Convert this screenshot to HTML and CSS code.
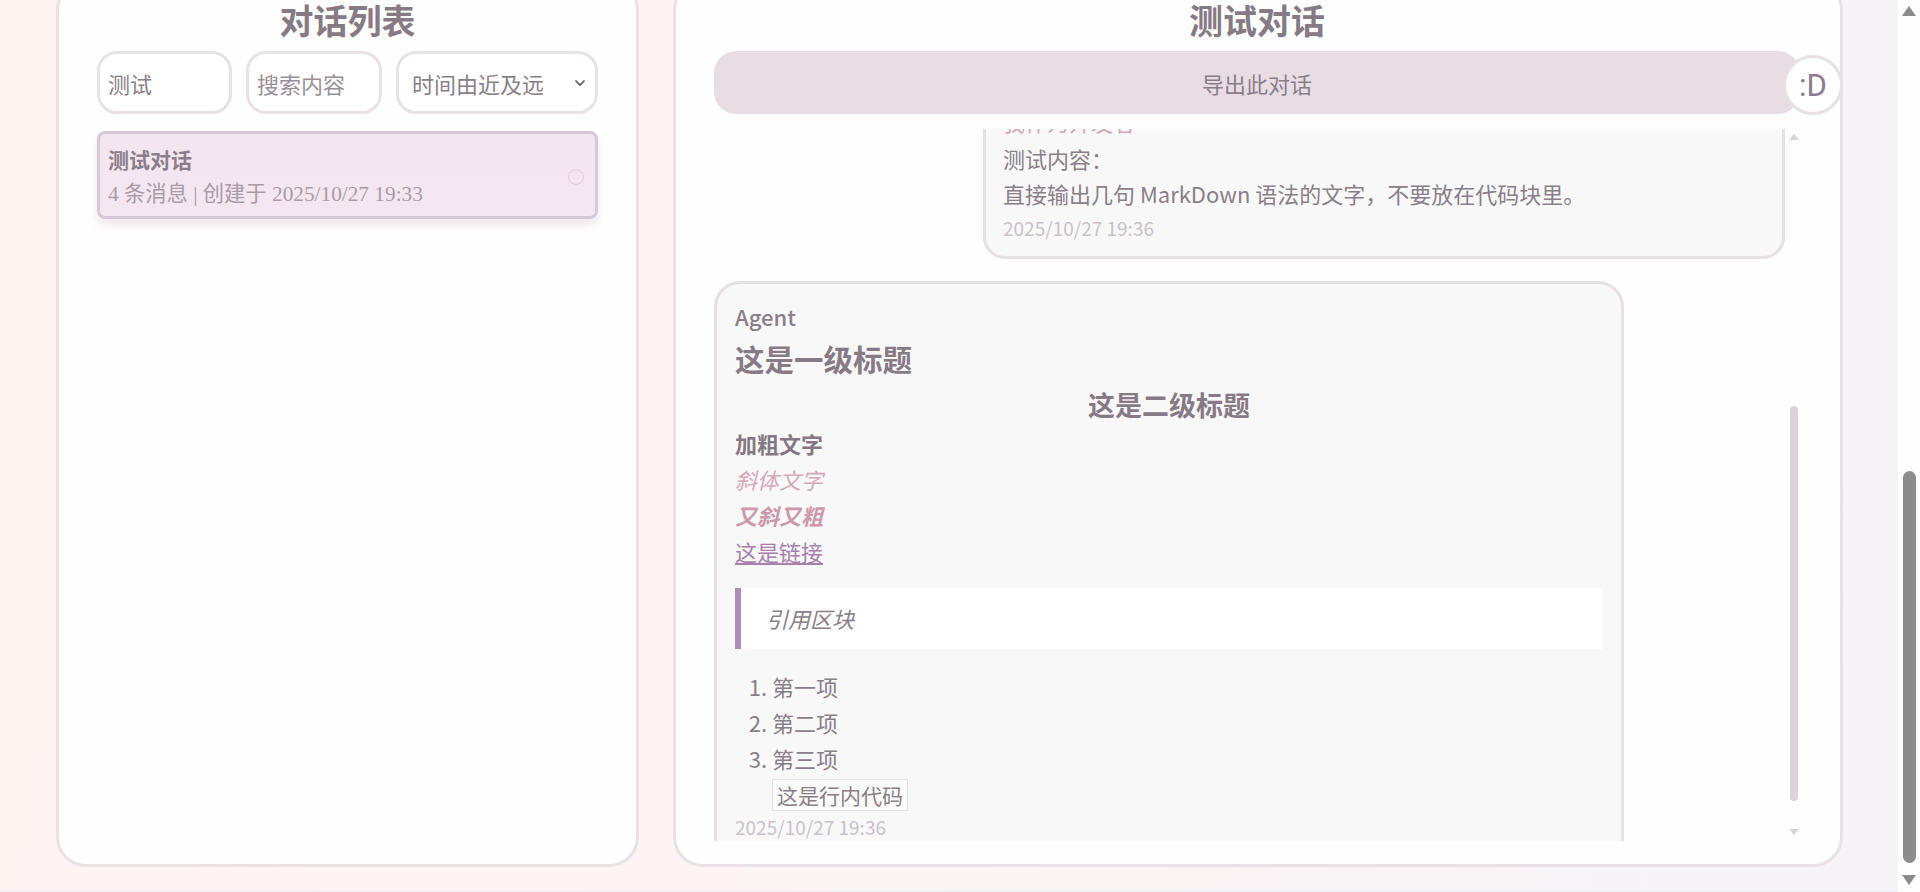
FILE: index.html
```html
<!DOCTYPE html>
<html lang="zh-CN">
<head>
<meta charset="utf-8">
<title>对话列表</title>
<link rel="stylesheet" href="styles.css">
</head>
<body>
<div class="page">
  <div class="stage">
    <div class="app">
      <aside class="panel list-panel">
        <h1 class="panel-title">对话列表</h1>
        <div class="filters">
          <input class="field field-title" value="测试">
          <input class="field field-content" placeholder="搜索内容">
          <div class="field select">
            <span>时间由近及远</span>
            <svg class="chev" width="12" height="8" viewBox="0 0 12 8"><path d="M1.5 1.5l4.5 4.5 4.5-4.5" fill="none" stroke="#555" stroke-width="1.6"/></svg>
          </div>
        </div>
        <div class="conv-item">
          <div class="conv-text">
            <div class="conv-name">测试对话</div>
            <div class="conv-meta">4 条消息 | 创建于 2025/10/27 19:33</div>
          </div>
          <span class="radio"></span>
        </div>
      </aside>

      <section class="panel chat-panel">
        <h1 class="panel-title">测试对话</h1>
        <div class="export-row">
          <button class="export">导出此对话</button>
          <div class="avatar">:D</div>
        </div>
        <div class="messages">
          <div class="msg-viewport">
            <div class="msg-track">
              <div class="bubble bubble-user">
                <div class="role">User</div>
                <p class="line pink">我作为开发者</p>
                <p class="line">测试内容：</p>
                <p class="line">直接输出几句 MarkDown 语法的文字，不要放在代码块里。</p>
                <div class="time">2025/10/27 19:36</div>
              </div>
              <div class="bubble bubble-agent">
                <div class="role">Agent</div>
                <h1 class="md-h1">这是一级标题</h1>
                <h2 class="md-h2">这是二级标题</h2>
                <p class="md-p first"><strong>加粗文字</strong></p>
                <p class="md-p"><em>斜体文字</em></p>
                <p class="md-p"><em><strong>又斜又粗</strong></em></p>
                <p class="md-p"><a href="#">这是链接</a></p>
                <blockquote class="md-quote">引用区块</blockquote>
                <ol class="md-ol">
                  <li>第一项</li>
                  <li>第二项</li>
                  <li>第三项<br><code>这是行内代码</code></li>
                </ol>
                <div class="time">2025/10/27 19:36</div>
              </div>
            </div>
          </div>
          <div class="mini-bar">
            <span class="mini-up"></span>
            <div class="mini-track"><div class="mini-thumb"></div></div>
            <span class="mini-down"></span>
          </div>
        </div>
      </section>
    </div>
  </div>
  <div class="page-bar">
    <span class="pb-up"></span>
    <div class="pb-track"><div class="pb-thumb"></div></div>
    <span class="pb-down"></span>
  </div>
</div>
</body>
</html>
```

FILE: styles.css
```css
* { box-sizing: border-box; }
html, body { margin: 0; height: 100%; }
body {
  font-family: "Noto Sans CJK SC", "Noto Sans", sans-serif;
  color: #8b7e8a;
  overflow: hidden;
}
.page { display: flex; height: 892px; }
.stage {
  flex: 1;
  height: 892px;
  overflow: hidden;
  background: linear-gradient(100deg, #fff3f1 0%, #fcf5f5 50%, #f7f3f7 100%);
  border-bottom: 2px solid #eef1f8;
}
.app {
  display: flex;
  gap: 34px;
  height: 887px;
  margin-top: -20px;
  padding: 0 55px 0 56px;
}
.panel {
  background: #fffefe;
  border: 3px solid #e9e1e5;
  border-radius: 30px;
  display: flex;
  flex-direction: column;
  padding: 18px 38px 23px;
}
.list-panel { width: 583px; flex: none; }
.chat-panel { flex: 1; padding-right: 40px; min-width: 0; }
.panel-title {
  margin: 0 0 6px;
  font: 700 34px/44px "Liberation Serif", "Noto Sans CJK SC", serif;
  text-align: center;
  color: #867a85;
}

/* filters */
.filters { display: flex; gap: 14px; height: 63px; flex: none; }
.field {
  height: 63px;
  border: 3px solid #e9e1e6;
  border-radius: 20px;
  background: #fff;
  font: 22px "Noto Sans CJK SC", sans-serif;
  color: #8b7e8a;
  padding: 0 8px;
  outline: none;
}
.field::placeholder { color: #9a8e99; }
.field-title { width: 135px; }
.field-content { width: 136px; }
.select {
  width: 202px;
  display: flex;
  align-items: center;
  justify-content: space-between;
  padding: 0 9px 0 13px;
}
.chev { flex: none; }

/* conversation item */
.conv-item {
  margin-top: 17px;
  height: 88px;
  flex: none;
  border: 3px solid #d7c8d7;
  border-radius: 8px;
  background: linear-gradient(180deg, #f4e6f1, #f5e7f2);
  display: flex;
  align-items: flex-start;
  padding: 12px 11px 0 8px;
  box-shadow: 0 6px 10px rgba(160, 130, 150, 0.18);
}
.conv-text { flex: 1; }
.conv-name {
  font: 700 21px/30px "Liberation Serif", "Noto Sans CJK SC", serif;
  color: #8b7e8a;
}
.conv-meta {
  margin-top: 3px;
  font: 21.3px/30px "Liberation Serif", "Noto Sans CJK SC", serif;
  color: #a89ba7;
}
.radio {
  width: 16px;
  height: 16px;
  margin-top: 23px;
  border: 1.5px solid #e0cddc;
  border-radius: 50%;
  flex: none;
}

/* chat panel */
.export-row { position: relative; height: 63px; flex: none; }
.export {
  width: 100%;
  height: 63px;
  border: 0;
  border-radius: 22px;
  background: #e8dde5;
  font: 22px "Noto Sans CJK SC", sans-serif;
  color: #8a7d88;
}
.avatar {
  position: absolute;
  right: -43px;
  top: 4px;
  width: 60px;
  height: 60px;
  border-radius: 50%;
  background: #fff;
  border: 3px solid #e8e0e5;
  display: flex;
  align-items: center;
  justify-content: center;
  font: 31px Roboto, "Noto Sans", sans-serif;
  color: #8d7b90;
}
.messages { flex: 1; margin-top: 15px; display: flex; min-height: 0; }
.msg-viewport { flex: 1; overflow: hidden; min-width: 0; }
.msg-track { margin-top: -76px; display: flex; flex-direction: column; }
.bubble {
  border: 3px solid #e7dfe4;
  background: #f8f8f8;
  font-size: 22px;
  line-height: 32px;
  color: #8b7e8a;
}
.bubble-user {
  width: 802px;
  align-self: flex-end;
  margin-right: 3px;
  border-radius: 22px;
  padding: 16px 17px;
}
.bubble-agent {
  width: 910px;
  margin-top: 22px;
  border-radius: 26px;
  padding: 16px 18px 40px;
}
.role { font-size: 22px; line-height: 32px; font-weight: 500; color: #8b7e8a; }
.line { margin: 0; line-height: 35px; }
.pink { color: #d6a7b6; margin-bottom: 2px; }
.time { margin-top: 5px; font-size: 19px; line-height: 24px; color: #cbbfca; }
.bubble-agent .time { margin-top: 3px; }

.md-h1 { margin: 6px 0 0; font-size: 29.5px; line-height: 40px; font-weight: 700; color: #877a86; }
.md-h2 { margin: 9px 0 0; font-size: 27px; line-height: 36px; font-weight: 700; text-align: center; color: #877a86; }
.md-p { margin: 0; line-height: 36px; }
.md-p.first { margin-top: 2px; }
.md-p strong { font-weight: 700; color: #857884; }
.md-p em { color: #d6a8b8; }
.md-p em strong { color: #cd98aa; }
.md-p a { color: #a97fae; text-decoration: underline; }
.md-quote {
  margin: 19px 0 0;
  background: #fff;
  border-left: 6px solid #b48cb8;
  padding: 12px 0 12px 25px;
  line-height: 37px;
  font-style: italic;
}
.md-ol { margin: 19px 0 0; padding-left: 37px; line-height: 36px; }
.md-ol code {
  font: 21px/23px "Noto Sans CJK SC", sans-serif;
  border: 1px solid #e8dfe6;
  background: #fcfbfc;
  padding: 0 4px;
  color: #8b7e8a;
}

/* inner scrollbar */
.mini-bar {
  width: 12px;
  flex: none;
  display: flex;
  flex-direction: column;
  align-items: center;
}
.mini-up {
  margin-top: 5px;
  width: 0; height: 0;
  border-left: 5px solid transparent;
  border-right: 5px solid transparent;
  border-bottom: 6px solid #dcd3da;
}
.mini-track {
  flex: 1;
  width: 8px;
  display: flex;
  flex-direction: column;
  padding: 266px 0 28px;
}
.mini-thumb { flex: 1; background: #dcd3da; border-radius: 4px; }
.mini-down {
  margin-bottom: 6px;
  width: 0; height: 0;
  border-left: 5px solid transparent;
  border-right: 5px solid transparent;
  border-top: 6px solid #dcd3da;
}

/* page scrollbar */
.page-bar {
  width: 22px;
  flex: none;
  background: #fdfdfd;
  display: flex;
  flex-direction: column;
  align-items: center;
}
.pb-up {
  margin-top: 6px;
  width: 0; height: 0;
  border-left: 7px solid transparent;
  border-right: 7px solid transparent;
  border-bottom: 10px solid #8b8b8b;
}
.pb-track {
  flex: 1;
  width: 13px;
  display: flex;
  flex-direction: column;
  padding: 455px 0 12px;
}
.pb-thumb { flex: 1; background: #8c8c8c; border-radius: 7px; }
.pb-down {
  margin-bottom: 7px;
  width: 0; height: 0;
  border-left: 7px solid transparent;
  border-right: 7px solid transparent;
  border-top: 10px solid #8b8b8b;
}
```
